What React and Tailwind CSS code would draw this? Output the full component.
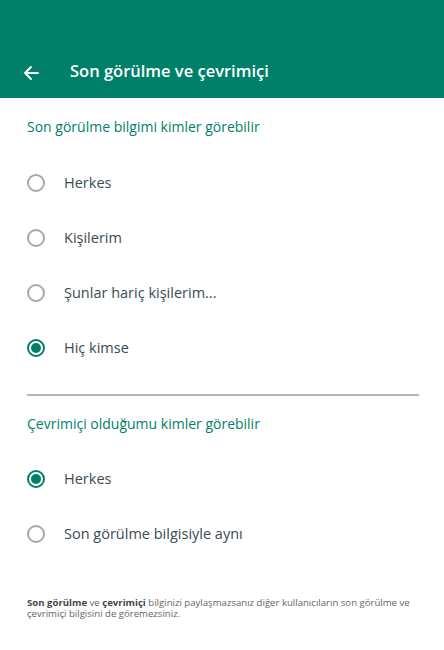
import React from "react";

function Radio({ checked }) {
  return checked ? (
    <span className="flex h-[18px] w-[18px] items-center justify-center rounded-full border-2 border-[#00806a]">
      <span className="h-[10px] w-[10px] rounded-full bg-[#00806a]" />
    </span>
  ) : (
    <span className="h-[18px] w-[18px] rounded-full border-2 border-[#a8a8a8]" />
  );
}

function Option({ label, checked }) {
  return (
    <div className="flex h-[55px] items-center pl-[27px]">
      <Radio checked={checked} />
      <span className="ml-[19px] text-[14.5px] text-[#3b4a54]">{label}</span>
    </div>
  );
}

export default function App() {
  return (
    <div className="h-[650px] w-[444px] bg-white font-['Open_Sans',sans-serif]">
      <div className="flex h-[98px] items-end bg-[#008069] pb-[17px]">
        <svg className="ml-[23px]" width="16" height="16" viewBox="0 0 16 16" fill="none" stroke="white" strokeWidth="1.8" strokeLinecap="round" strokeLinejoin="round">
          <path d="M15 8H2M8 2L2 8l6 6" />
        </svg>
        <span className="ml-[31px] text-[16.5px] font-semibold leading-[20px] text-white">Son görülme ve çevrimiçi</span>
      </div>
      <div className="pt-[18px] pl-[27px] text-[14px] text-[#00806a]">Son görülme bilgimi kimler görebilir</div>
      <div className="pt-[18px]">
        <Option label="Herkes" />
        <Option label="Kişilerim" />
        <Option label="Şunlar hariç kişilerim..." />
        <Option label="Hiç kimse" checked />
      </div>
      <div className="ml-[27px] mr-[25px] mt-[19px] h-[2px] bg-[#b5b5b5]" />
      <div className="pt-[17px] pl-[27px] text-[14px] text-[#00806a]">Çevrimiçi olduğumu kimler görebilir</div>
      <div className="pt-[17px]">
        <Option label="Herkes" checked />
        <Option label="Son görülme bilgisiyle aynı" />
      </div>
      <p className="mt-[36px] px-[27px] text-[9.6px] leading-[11px] text-[#666]">
        <span className="font-bold text-[#444]">Son görülme</span> ve <span className="font-bold text-[#444]">çevrimiçi</span> bilginizi paylaşmazsanız diğer kullanıcıların son görülme ve
        <br />
        çevrimiçi bilgisini de göremezsiniz.
      </p>
    </div>
  );
}
